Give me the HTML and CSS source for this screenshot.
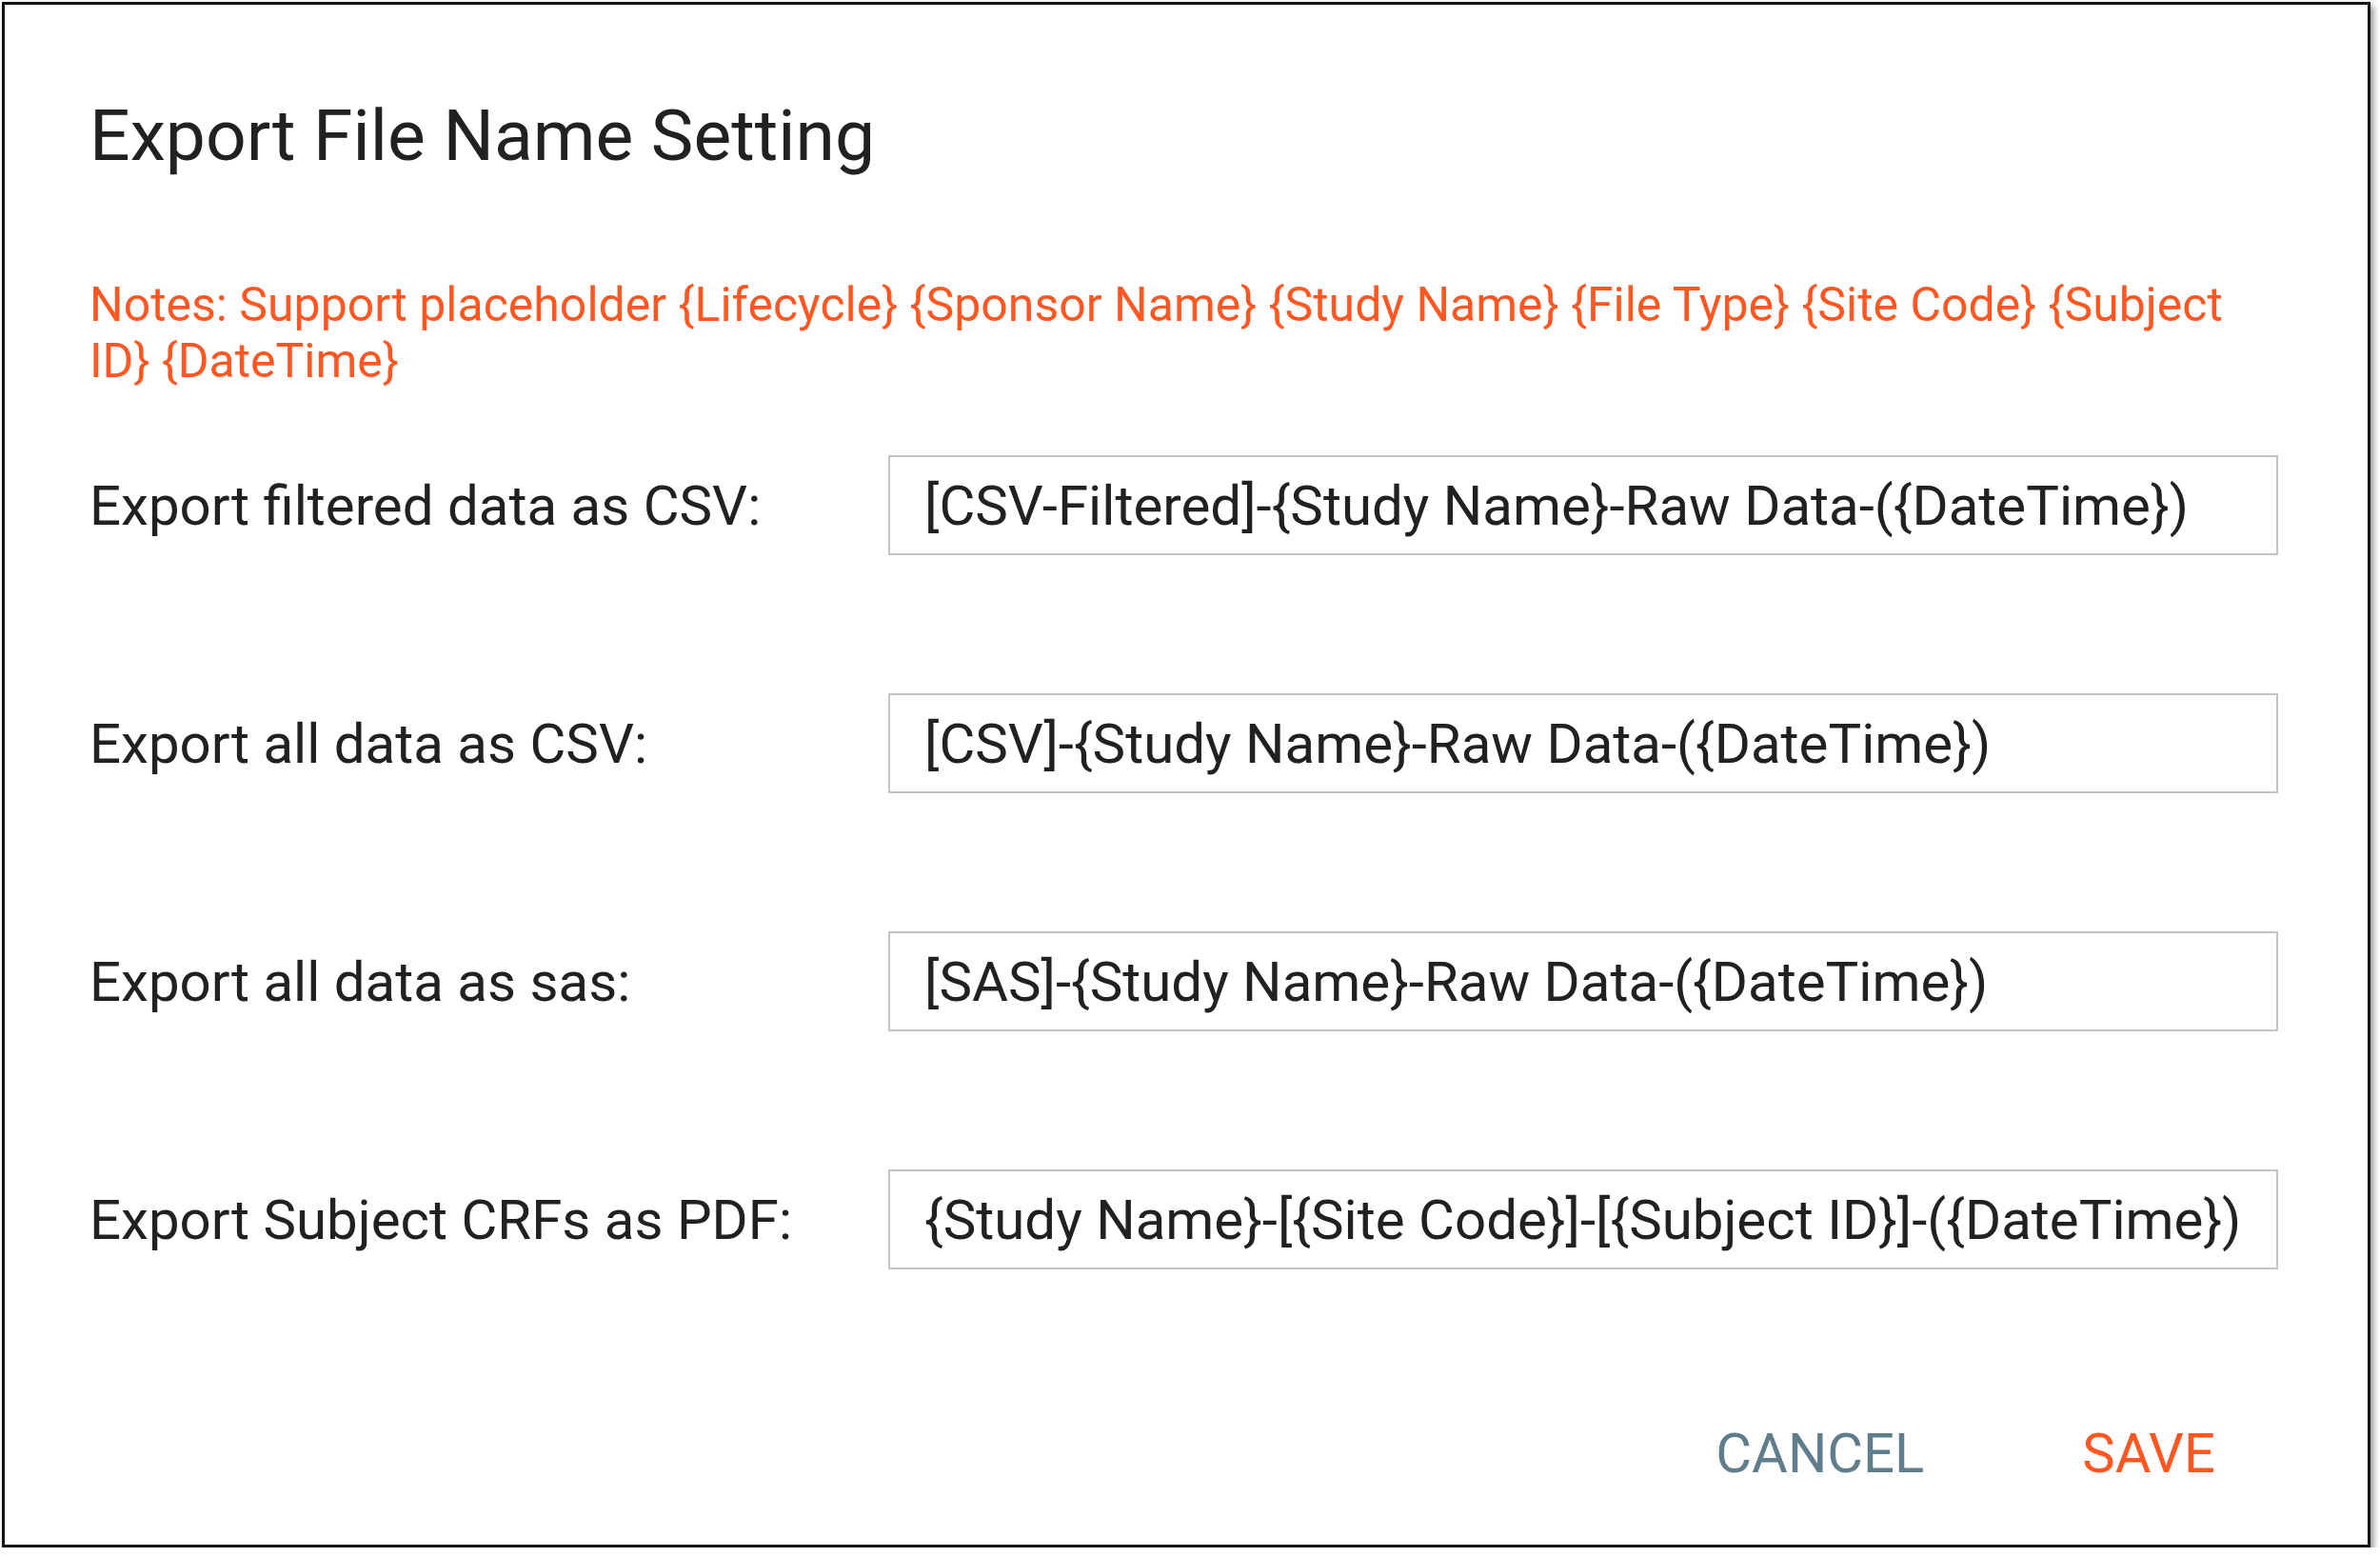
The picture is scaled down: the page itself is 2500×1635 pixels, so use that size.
FILE: index.html
```html
<!DOCTYPE html>
<html lang="en">
<head>
  <meta name="viewport" content="width=device-width, initial-scale=1.0" />
  <title>Export File Name Setting</title>
  <link rel="stylesheet" href="styles.css">
</head>
<body>

  <div class="dialog">
    <h1 class="dialog-title">Export File Name Setting</h1>

    <p class="notes">Notes: Support placeholder {Lifecycle} {Sponsor Name} {Study Name} {File Type} {Site Code} {Subject ID} {DateTime}</p>

    <form class="name-form">
      <div class="row">
        <label for="filteredCsv">Export filtered data as CSV:</label>
        <input type="text" id="filteredCsv" value="[CSV-Filtered]-{Study Name}-Raw Data-({DateTime})" />
      </div>
      <div class="row">
        <label for="allCsv">Export all data as CSV:</label>
        <input type="text" id="allCsv" value="[CSV]-{Study Name}-Raw Data-({DateTime})" />
      </div>
      <div class="row">
        <label for="allSas">Export all data as sas:</label>
        <input type="text" id="allSas" value="[SAS]-{Study Name}-Raw Data-({DateTime})" />
      </div>
      <div class="row">
        <label for="crfPdf">Export Subject CRFs as PDF:</label>
        <input type="text" id="crfPdf" value="{Study Name}-[{Site Code}]-[{Subject ID}]-({DateTime})" />
      </div>
    </form>

    <div class="actions">
      <button type="button" class="btn btn-cancel">Cancel</button>
      <button type="button" class="btn btn-save">Save</button>
    </div>
  </div>

</body>
</html>
```

FILE: styles.css
```css
body {
  margin: 0;
  background: #fff;
  font-family: Roboto, "Liberation Sans", Arial, sans-serif;
  color: #212121;
}

.dialog {
  box-sizing: border-box;
  width: 2488px;
  height: 1623px;
  margin: 2px 0 0 2px;
  padding: 93px 94px 0 89px;
  border: 3px solid #141414;
  background: #fff;
  box-shadow: 3px 4px 7px rgba(0, 0, 0, 0.45);
}

.dialog-title {
  margin: 0;
  font-size: 75px;
  font-weight: 400;
  line-height: 88px;
  color: #212121;
}

.notes {
  margin: 105px 0 0;
  font-size: 50px;
  line-height: 59px;
  color: #ff5722;
}

.name-form {
  margin-top: 69px;
  display: flex;
  flex-direction: column;
  gap: 145px;
}

.row {
  display: grid;
  grid-template-columns: 839px 1fr;
  align-items: center;
}

.row label {
  font-size: 58.2px;
  line-height: 70px;
  color: #212121;
}

.row input {
  box-sizing: border-box;
  width: 100%;
  height: 105px;
  padding: 0 36px;
  border: 2px solid #c4c4c4;
  border-radius: 0;
  font-family: inherit;
  font-size: 58.2px;
  color: #212121;
  background: #fff;
  outline: none;
}

.actions {
  margin-top: 149px;
  display: flex;
  justify-content: flex-end;
  gap: 34px;
}

.btn {
  height: 88px;
  padding: 0 66px;
  border: none;
  background: transparent;
  font-family: inherit;
  font-size: 58px;
  line-height: 88px;
  text-transform: uppercase;
  cursor: pointer;
}

.btn-cancel {
  color: #607d8b;
}

.btn-save {
  color: #ff5722;
}
```
